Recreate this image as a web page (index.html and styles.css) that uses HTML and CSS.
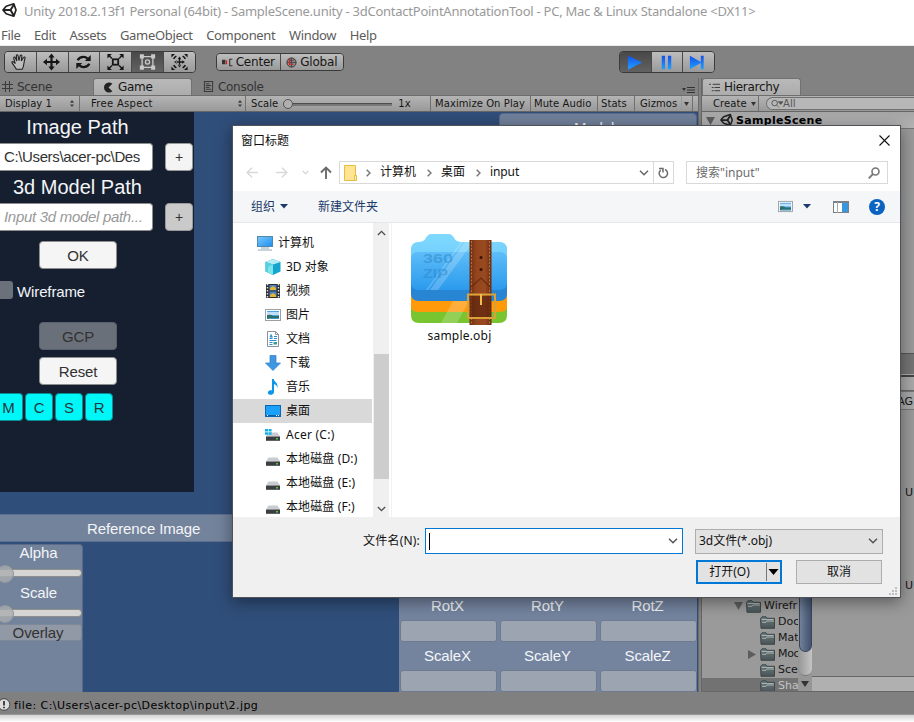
FILE: index.html
```html
<!DOCTYPE html>
<html lang="zh-CN">
<head>
<meta charset="utf-8">
<title>Unity 2018.2.13f1 Personal (64bit)</title>
<link rel="stylesheet" href="styles.css">
</head>
<body>
<svg class="defs" aria-hidden="true">
  <defs>
    <linearGradient id="gBlue" x1="0" y1="0" x2="1" y2="1"><stop offset="0" stop-color="#7cc8fb"/><stop offset="1" stop-color="#1c8fee"/></linearGradient>
    <linearGradient id="gFolder" x1="0" y1="0" x2="0" y2="1"><stop offset="0" stop-color="#78d6fd"/><stop offset=".35" stop-color="#5bbcf8"/><stop offset="1" stop-color="#2b9aed"/></linearGradient>
    <linearGradient id="gPlay" x1="0" y1="0" x2="0" y2="1"><stop offset="0" stop-color="#1450e8"/><stop offset="1" stop-color="#22a0ff"/></linearGradient>
    <linearGradient id="gDir" x1="0" y1="0" x2="0" y2="1"><stop offset="0" stop-color="#6d7a7c"/><stop offset="1" stop-color="#485456"/></linearGradient>
    <linearGradient id="gStrap" x1="0" y1="0" x2="1" y2="0"><stop offset="0" stop-color="#6b2c10"/><stop offset=".3" stop-color="#93451d"/><stop offset=".7" stop-color="#9a4a20"/><stop offset="1" stop-color="#6b2c10"/></linearGradient>
    <symbol id="unity" viewBox="0 0 16 16"><path d="M1 8 4.2 4.2 11.8 1.8 14 8l-2.200 6.200L4.200 11.800z" fill="none" stroke="#222" stroke-width="1.700" stroke-linejoin="round"/><path d="M1.500 8H8.500L12 2.500M8.500 8l3.300 5.500" fill="none" stroke="#222" stroke-width="2"/></symbol>
    <symbol id="dir" viewBox="0 0 15 13"><path d="M.5 2.500 2 .8h4l1 1.500h7.500v10H1z" fill="url(#gDir)" stroke="#3e4849"/><path d="M1.500 3.500h12M2 6.300h4l1-1.300h7" stroke="#aab3b4" fill="none"/></symbol>
    <symbol id="drive" viewBox="0 0 16 16"><path d="M3.500 5.500h9L15 9.500H1z" fill="#c9ccd0"/><rect x="1" y="9.500" width="14" height="4.300" fill="#3b3d40"/><rect x="11" y="11" width="1.800" height="1.500" fill="#45e03a"/></symbol>
    <symbol id="photo" viewBox="0 0 16 14"><rect x=".5" y="1.500" width="15" height="11" fill="#fff" stroke="#9aa0a6"/><rect x="2" y="3" width="12" height="8" fill="#4da3e6"/><path d="M2 4h12v3H2z" fill="#bfe0f8"/><path d="M2 7q4-1 6 1h6v3H2z" fill="#2f6f6a"/><path d="M4 10h10v1H2z" fill="#4594c8"/></symbol>
    <symbol id="chev" viewBox="0 0 10 6"><path d="M1 .8l4 4 4-4" fill="none" stroke="currentColor" stroke-width="1.500"/></symbol>
    <symbol id="spin" viewBox="0 0 6 8"><path d="M3 0l2.300 3H.7zM3 8L.7 5h4.600z" fill="#3c3c3c"/></symbol>
  </defs>
</svg>

<div class="app">
  <header class="titlebar">
    <svg class="logo"><use href="#unity"/></svg>
    <span class="caption">Unity 2018.2.13f1 Personal (64bit) - SampleScene.unity - 3dContactPointAnnotationTool - PC, Mac &amp; Linux Standalone &lt;DX11&gt;</span>
  </header>
  <nav class="menubar"><span>File</span><span>Edit</span><span>Assets</span><span>GameObject</span><span>Component</span><span>Window</span><span>Help</span></nav>

  <div class="toolbar">
    <div class="group tools">
      <b><svg viewBox="0 0 20 20"><path d="M6.500 18C5 15 2.200 12.500 1.500 10.300c.5-1.500 2-.8 3.800 1.500L3.500 5.500c.3-1.500 1.600-1.300 2 0l1.500 3.500L6.500 3c.3-1.500 1.700-1.300 1.900 0l1 5.500 1.400-5.500c.5-1.300 1.900-1 1.800.3l-.6 5.500 2.500-3.800c.9-1 2-.5 1.700.6C14.500 10 15.500 14 13 18z" fill="#bdbdbd" stroke="#222" stroke-width="1.200"/></svg></b>
      <b><svg viewBox="0 0 20 20"><path d="M10 .5l3.500 4.500H11.200v3.800H15V6.500l4.500 3.500L15 13.500v-2.300h-3.800V15h2.300L10 19.500 6.500 15h2.300v-3.800H5v2.300L.5 10 5 6.500v2.300h3.800V5H6.500z" fill="#161616"/></svg></b>
      <b><svg viewBox="0 0 20 20"><path d="M3.500 8Q5.500 4.300 10 4.300q2.500 0 4.500 2M16.500 12q-2 3.700-6.500 3.700-2.500 0-4.500-2" fill="none" stroke="#161616" stroke-width="2.600"/><path d="M11.500 8.800h6.500V2.300zM8.500 11.200H2v6.500z" fill="#161616"/></svg></b>
      <b><svg viewBox="0 0 20 20"><rect x="7" y="7" width="6" height="6" fill="none" stroke="#161616" stroke-width="2"/><path d="M6 6 3 3M14 6l3-3M6 14l-3 3M14 14l3 3" stroke="#161616" stroke-width="1.600"/><path d="M1 1h5L1 6zM19 1v5l-5-5zM1 19v-5l5 5zM19 19h-5l5-5z" fill="#161616"/></svg></b>
      <b class="on"><svg viewBox="0 0 20 20"><path d="M4 4h12v12H4z" fill="none" stroke="#c8c8c8" stroke-width="1.500"/><path d="M1.500 1.500h4.500v4.500H1.500zM14 1.500h4.500v4.500H14zM1.500 14h4.500v4.500H1.500zM14 14h4.500v4.500H14z" fill="#c8c8c8"/><circle cx="10" cy="10" r="2.300" fill="none" stroke="#c8c8c8" stroke-width="1.500"/></svg></b>
      <b><svg viewBox="0 0 20 20"><path d="M10 4l2 3h-4zM10 16l2-3H8zM4 10l3 2V8zM16 10l-3 2V8zM9.300 6h1.400v8H9.300zM6 9.300h8v1.400H6z" fill="#161616"/><path d="M3.500 6.500A7.500 7.500 0 0 1 6.500 3.500M13.500 3.500a7.500 7.500 0 0 1 3 3M16.500 13.500a7.500 7.500 0 0 1-3 3M6.500 16.500a7.500 7.500 0 0 1-3-3" stroke="#161616" stroke-width="1.800" fill="none"/><path d="M1 1h4L1 5zM19 1v4l-4-4zM1 19v-4l4 4zM19 19h-4l4-4z" fill="#161616"/></svg></b>
    </div>
    <div class="group pivot">
      <b><svg viewBox="0 0 10 8"><path d="M0 1.500h3v4H0z" fill="#333"/><path d="M4 2v3.500" stroke="#c22" stroke-width="1.300"/><path d="M9.500 1H7v6h2.500" fill="none" stroke="#333"/></svg>Center</b>
      <b><svg viewBox="0 0 12 12"><circle cx="6" cy="6" r="5" fill="#888" stroke="#333"/><path d="M1 6h10M6 1v10M2.500 3Q6 5 9.500 3" stroke="#333" fill="none" stroke-width=".7"/><path d="M4 2v6h4" stroke="#d22" stroke-width="1.500" fill="none"/></svg>Global</b>
    </div>
    <div class="group play">
      <b class="on"><svg viewBox="0 0 20 20"><path d="M3 2.500l15 7.500-15 7.500z" fill="url(#gPlay)"/></svg></b>
      <b><svg viewBox="0 0 20 20"><path d="M5 3h3.500v14H5zM11.500 3H15v14h-3.500z" fill="url(#gPlay)"/></svg></b>
      <b><svg viewBox="0 0 20 20"><path d="M2 3l11.500 6.500V3h3v14h-3v-6.500L2 17z" fill="url(#gPlay)"/></svg></b>
    </div>
  </div>

  <div class="docks">
    <section class="left">
      <div class="tabs">
        <span class="t-scene"><svg viewBox="0 0 11 11"><path d="M3.500 0v11M7.500 0v11M0 3.500h11M0 7.500h11" stroke="#3c3c3c"/></svg>Scene</span>
        <span class="tab t-game"><svg viewBox="0 0 10 10"><path d="M8.500 1.500A4.600 4.600 0 1 0 8.500 8.500L5 5z" fill="#222"/></svg>Game</span>
        <span class="t-console"><svg viewBox="0 0 10 12"><rect x=".5" y=".5" width="9" height="11" fill="none" stroke="#333"/><path d="M2 3h4M2 5h6M2 7h4M2 9h6" stroke="#333"/></svg>Console</span>
        <svg class="opt" viewBox="0 0 13 8"><path d="M0 2h4L2 5z" fill="#333"/><path d="M5 1.500h8M5 4h8M5 6.500h8" stroke="#333"/></svg>
      </div>
      <div class="bar">
        <span class="c-display">Display 1<svg class="spin"><use href="#spin"/></svg></span>
        <span class="c-aspect">Free Aspect<svg class="spin"><use href="#spin"/></svg></span>
        <span class="c-scale">Scale<i class="track"><i></i></i><em>1x</em></span>
        <span class="c-max">Maximize On Play</span>
        <span class="c-mute">Mute Audio</span>
        <span class="c-stats">Stats</span>
        <span class="c-giz">Gizmos</span>
        <span class="c-arrow"><svg viewBox="0 0 6 4"><path d="M0 0h5L2.500 4z" fill="#333"/></svg></span>
      </div>
      <div class="game">
        <div class="panel">
          <h2>Image Path</h2>
          <div class="row"><div class="field">C:\Users\acer-pc\Des</div><div class="plus">+</div></div>
          <h2 class="second">3d Model Path</h2>
          <div class="row"><div class="field hint">Input 3d model path...</div><div class="plus dim">+</div></div>
          <div class="btn ok">OK</div>
          <div class="check"><i></i><span>Wireframe</span></div>
          <div class="btn off">GCP</div>
          <div class="btn">Reset</div>
          <div class="keys"><b>M</b><b>C</b><b>S</b><b>R</b></div>
        </div>
        <div class="modelhead">Model</div>
        <div class="refhead">Reference Image</div>
        <div class="lower">
          <div class="ref">
            <span>Alpha</span><i class="slide"></i>
            <span>Scale</span><i class="slide"></i>
            <span class="overlay">Overlay</span>
          </div>
          <div class="xform">
            <span>RotX</span><span>RotY</span><span>RotZ</span><i></i><i></i><i></i>
            <span>ScaleX</span><span>ScaleY</span><span>ScaleZ</span><i></i><i></i><i></i>
          </div>
        </div>
      </div>
    </section>

    <section class="right">
      <div class="tabs"><span class="tab t-hier"><svg viewBox="0 0 12 10"><path d="M0 1.500h2M4 1.500h8M3 5h2M6 5h6M3 8.500h2M6 8.500h6" stroke="#333"/></svg>Hierarchy</span></div>
      <div class="bar">
        <span class="c-create">Create<svg viewBox="0 0 6 4"><path d="M0 0h5L2.500 4z" fill="#333"/></svg></span>
        <span class="find"><svg viewBox="0 0 14 10"><circle cx="5" cy="4" r="3" fill="none" stroke="#555"/><path d="M7 6l3 3M9 2.500h5l-2.500 3z" stroke="#555" fill="#555" stroke-width=".8"/></svg>All</span>
      </div>
      <div class="scene"><svg class="tri" viewBox="0 0 9 8"><path d="M0 0h9L4.500 8z" fill="#5d5d5d"/></svg><svg class="mark"><use href="#unity"/></svg>SampleScene</div>
      <div class="hbody"></div>
      <div class="strip"></div>
      <div class="strip2"></div>
      <div class="ag">AG</div>
      <div class="us"><span>U</span><span>U</span></div>
      <div class="project">
        <div class="tree">
          <p class="root"><svg class="tri" viewBox="0 0 9 8"><path d="M0 0h9L4.500 8z" fill="#5d5d5d"/></svg><svg class="dir"><use href="#dir"/></svg>Wirefr</p>
          <p><svg class="dir"><use href="#dir"/></svg>Doc</p>
          <p><svg class="dir"><use href="#dir"/></svg>Mat</p>
          <p class="more"><svg class="tri" viewBox="0 0 8 9"><path d="M0 0v9l8-4.500z" fill="#5d5d5d"/></svg><svg class="dir"><use href="#dir"/></svg>Moc</p>
          <p><svg class="dir"><use href="#dir"/></svg>Sce</p>
          <p class="sel"><svg class="dir"><use href="#dir"/></svg>Sha</p>
        </div>
        <div class="vscroll"><i><i></i></i><svg viewBox="0 0 8 6"><path d="M0 0h8L4 6z" fill="#333"/></svg></div>
        <div class="assets"></div>
      </div>
    </section>
  </div>

  <footer class="status"><svg viewBox="0 0 15 14"><circle cx="4" cy="6.500" r="5.800" fill="#ddd" stroke="#444"/><path d="M4 3v4.500M4 8.800v1.500" stroke="#333" stroke-width="1.800"/></svg>file: C:\Users\acer-pc\Desktop\input\2.jpg</footer>
  <div class="below"></div>
</div>

<div class="dialog">
  <div class="dtitle"><span>窗口标题</span><svg viewBox="0 0 11 11"><path d="M.5.5l10 10M10.500.5l-10 10" stroke="#111" stroke-width="1.100"/></svg></div>
  <div class="nav">
    <svg class="arr" viewBox="0 0 12 11"><path d="M12 5.500H1M6 .8L1.200 5.500 6 10.200" fill="none" stroke="#d9d9d9" stroke-width="1.500"/></svg>
    <svg class="arr" viewBox="0 0 12 11"><path d="M0 5.500h11M6 .8l4.800 4.700L6 10.200" fill="none" stroke="#d9d9d9" stroke-width="1.500"/></svg>
    <svg class="tiny"><use href="#chev"/></svg>
    <svg class="up" viewBox="0 0 12 13"><path d="M6 13V1.500M1 6.500L6 1.500l5 5" fill="none" stroke="#6b6b6b" stroke-width="1.900"/></svg>
    <div class="address">
      <svg class="yf" viewBox="0 0 14 16"><path d="M.5.500h11v10h1v5H.5z" fill="#ffe493" stroke="#e9bd42"/><path d="M10.500 10.500v5h2v-5z" fill="#fff0b8" stroke="#e9bd42"/></svg>
      <svg class="gt" viewBox="0 0 5 8"><path d="M.7.7L4 4 .7 7.300" fill="none" stroke="#777" stroke-width="1.500"/></svg><span class="w1">计算机</span>
      <svg class="gt" viewBox="0 0 5 8"><path d="M.7.7L4 4 .7 7.300" fill="none" stroke="#777" stroke-width="1.500"/></svg><span class="w2">桌面</span>
      <svg class="gt" viewBox="0 0 5 8"><path d="M.7.7L4 4 .7 7.300" fill="none" stroke="#777" stroke-width="1.500"/></svg><span class="w3">input</span>
      <svg class="drop"><use href="#chev"/></svg>
      <span class="reload"><svg viewBox="0 0 11 12"><path d="M7 2.500a4.200 4.200 0 1 1-4.300.6M1 1.500h4v4" fill="none" stroke="#6b6b6b" stroke-width="1.500"/></svg></span>
    </div>
    <div class="search"><span>搜索"input"</span><svg viewBox="0 0 12 12"><circle cx="7.500" cy="4.500" r="3.500" fill="none" stroke="#777" stroke-width="1.600"/><path d="M5 7L.8 11.300" stroke="#777" stroke-width="1.900"/></svg></div>
  </div>
  <div class="cmd">
    <span class="org">组织</span><svg class="dn" viewBox="0 0 8 5"><path d="M0 0h8L4 4.500z" fill="#1b3a6b"/></svg>
    <span class="newf">新建文件夹</span>
    <svg class="view"><use href="#photo"/></svg><svg class="dn d2" viewBox="0 0 8 5"><path d="M0 0h8L4 4.500z" fill="#1b3a6b"/></svg>
    <svg class="pane" viewBox="0 0 16 12"><rect x=".5" y=".5" width="15" height="11" fill="#fff" stroke="#7b8187"/><path d="M0 1h16" stroke="#7b8187" stroke-width="2"/><path d="M4.500 1v11" stroke="#a5a9ad"/><rect x="9" y="2" width="6" height="9" fill="#3a96dd"/></svg>
    <span class="help">?</span>
  </div>
  <div class="dbody">
    <div class="side">
      <p class="top"><svg viewBox="0 0 16 16"><rect x=".5" y="1.500" width="15" height="10" fill="url(#gBlue)" stroke="#4f87ad"/><path d="M4 13h8M1 15h14" stroke="#8fa8b8"/></svg>计算机</p>
      <p><svg viewBox="0 0 16 16"><path d="M8 0l7.500 3v9.500L8 16 .5 12.500V3z" fill="#12a5cf"/><path d="M8 0l7.500 3L8 5.500.5 3z" fill="#b7ecf5"/><path d="M.5 3L8 5.500V16L.5 12.500z" fill="#54d1e0"/><path d="M3 8l5-2.500V16L3 13.500z" fill="#7fe3ec"/></svg>3D 对象</p>
      <p><svg viewBox="0 0 16 16"><rect x="1" y="1" width="14" height="14" fill="#2c2c2c"/><path d="M2.500 1v14M13.500 1v14" stroke="#ddd" stroke-width="1.500" stroke-dasharray="1.500 1.500"/><rect x="4.500" y="2" width="7" height="5.500" fill="#4c83c8"/><rect x="4.500" y="8.500" width="7" height="5.500" fill="#4c83c8"/><path d="M5 5l3-2 3 2v2H5zM5 12l3-2 3 2v2H5z" fill="#e0b53a"/></svg>视频</p>
      <p><svg viewBox="0 0 16 14"><use href="#photo"/></svg>图片</p>
      <p><svg viewBox="0 0 16 16"><path d="M2.500.5h8l3 3v12h-11z" fill="#fff" stroke="#8b9197"/><path d="M10.500.5v3h3" fill="none" stroke="#8b9197"/><path d="M4.500 7.500h3M9 5.500h3M9 7.500h3M4.500 9.500h7M4.500 11.500h3M4.500 13.500h3" stroke="#2d8fd0"/><path d="M4.500 6.500l1.500-4 2 4z" fill="#2d8fd0"/><rect x="8.500" y="11" width="3.500" height="2.500" fill="#3c9a8c"/></svg>文档</p>
      <p><svg viewBox="0 0 16 16"><path d="M5 .5h6V8h4.500L8 15.500.5 8H5z" fill="#3f97e0" stroke="#2b80c8" stroke-width=".7"/></svg>下载</p>
      <p><svg viewBox="0 0 16 16"><path d="M7 0h1.800c.2 3 4.500 3.500 3.800 9-.8-3-2-3.500-3.600-3.800V13c0 2-2 3-4 2.800-2.800-.3-2.800-3.800 0-4.500.8-.2 1.400-.2 2 0z" fill="#0a97ea"/></svg>音乐</p>
      <p class="cur"><svg viewBox="0 0 16 16"><rect x=".5" y="2.500" width="15" height="11" fill="#1ba1fa" stroke="#0c68b0"/><path d="M1 12.500h14" stroke="#0a5ea3"/><path d="M2 12.500h1M11 12.500h1M13 12.500h1" stroke="#fff"/></svg>桌面</p>
      <p class="acer"><svg viewBox="0 0 16 16"><use href="#drive"/><path d="M0 2h3v2.500H0zM3.600 2h3v2.500h-3zM0 5.200h3v2.500H0zM3.600 5.200h3v2.500h-3z" fill="#10b4ea"/></svg>Acer (C:)</p>
      <p class="disk"><svg><use href="#drive"/></svg>本地磁盘 (D:)</p>
      <p class="disk"><svg><use href="#drive"/></svg>本地磁盘 (E:)</p>
      <p class="disk"><svg><use href="#drive"/></svg>本地磁盘 (F:)</p>
    </div>
    <div class="scroll"><svg class="flip"><use href="#chev"/></svg><i></i><svg><use href="#chev"/></svg></div>
    <div class="files">
      <div class="file">
        <svg viewBox="0 0 96 92">
          <path d="M0 60h96v21q0 8-8 8H8q-8 0-8-8z" fill="#79c52f"/><path d="M0 60h96v13q0 5-8 5H8q-8 0-8-5z" fill="#ff9a0a"/>
          <path d="M0 44h96v16q0 7-8 7H8q-8 0-8-7z" fill="#2785d4"/>
          <path d="M0 16q0-8 8-8 5 0 7-4 2-4 6-4h16q4 0 6 4 2 4 7 4h38q8 0 8 8v33q0 7-8 7H8q-8 0-8-7z" fill="url(#gFolder)"/>
          <path d="M0 25q0-7 8-7h80q8 0 8 7v-9q0-8-8-8H50q-5 0-7-4-2-4-6-4H21q-4 0-6 4-2 4-7 4-8 0-8 8z" fill="#86dcff" opacity=".6"/>
          <path d="M54 8h8L27 56h-8zM50 8h2L17 56h-2zM42 67h16l-12 22H30z" fill="#fff" opacity=".2"/>
          <text x="12" y="29" class="zip" textLength="30" lengthAdjust="spacingAndGlyphs">360</text><text x="12" y="43.500" class="zip" textLength="25" lengthAdjust="spacingAndGlyphs">ZIP</text>
          <path d="M58.500 6h22v85h-22z" fill="url(#gStrap)"/><path d="M60.500 7v83M78.500 7v83" stroke="#cc8050" stroke-width=".8" stroke-dasharray="2 1.500"/>
          <circle cx="70" cy="23.500" r="1.500" fill="#351205"/><circle cx="70" cy="35.500" r="1.500" fill="#351205"/>
          <path d="M59 54l11-10 10 10" fill="none" stroke="#6c2d12" stroke-width="1.200"/><path d="M60 85V62h20v23z" fill="#5c250e" opacity=".7"/>
          <rect x="57" y="60.500" width="27" height="23.500" fill="none" stroke="#dba136" stroke-width="2"/><path d="M70 60v11" stroke="#f1c04c" stroke-width="2"/>
        </svg>
        <span>sample.obj</span>
      </div>
    </div>
  </div>
  <div class="dfoot">
    <div class="line">
      <label>文件名(N):</label>
      <div class="name"><i></i><svg><use href="#chev"/></svg></div>
      <div class="type"><span>3d文件(*.obj)</span><svg><use href="#chev"/></svg></div>
    </div>
    <div class="acts"><div class="open"><span>打开(O)</span><i><svg viewBox="0 0 10 6"><path d="M0 0h10L5 6z"/></svg></i></div><div class="cancel">取消</div></div>
    <svg class="grip" viewBox="0 0 8 8"><path d="M6 0h2v2H6zM3 3h2v2H3zM6 3h2v2H6zM0 6h2v2H0zM3 6h2v2H3zM6 6h2v2H6z" fill="#bfbfbf"/></svg>
  </div>
</div>
</body>
</html>
```
FILE: styles.css
```css
* { box-sizing: border-box; }
html, body { margin: 0; height: 722px; overflow: hidden; }
body { position: relative; width: 914px; background: #fff; }
p, h2 { margin: 0; }
i, em { font-style: normal; }
svg { flex: none; display: block; }
.defs { position: absolute; width: 0; height: 0; }

.app { display: flex; flex-direction: column; height: 722px; font: 11px/16px "DejaVu Sans", sans-serif; color: #161616; }
.titlebar { display: flex; height: 22px; padding-left: 2px; align-items: center; font: 13px/20px "Noto Sans", sans-serif; color: #999; white-space: nowrap; }
.logo { width: 16px; height: 16px; margin: -2px 6px 0 0; }
.caption { margin-top: -1px; letter-spacing: -.25px; }
.menubar { display: flex; gap: 13.500px; height: 24px; padding: 3px 0 0 1px; border-bottom: 1px solid #e9ecea; font: 13px/20px "Noto Sans", sans-serif; letter-spacing: -.33px; color: #5c5c5c; }

.toolbar { display: flex; height: 32px; padding: 5px 0 0 4px; background: #828282; }
.group { display: flex; height: 22px; border: 1px solid #3b3b3b; border-radius: 4px; overflow: hidden; }
.group b { display: flex; align-items: center; justify-content: center; font-weight: 400; background: linear-gradient(#bdbdbd, #999); border-right: 1px solid #4a4a4a; }
.group b:last-child { border-right: 0; }
.group b.on { background: linear-gradient(#484848, #626262); }
.tools { width: 192px; }
.tools b, .play b { flex: 1; }
.tools svg { width: 19px; height: 18px; margin-left: -1px; }
.pivot { width: 128px; height: 18px; margin: 2px 0 0 20px; font-size: 12px; letter-spacing: -.2px; }
.pivot b { flex: 1; gap: 3px; }
.pivot svg { width: 11px; height: 11px; }
.play { width: 96px; margin-left: 275px; }
.play svg { width: 19px; height: 19px; margin-left: -2px; }

.docks { display: flex; height: 614px; background: #828282; }
.left { display: flex; flex-direction: column; width: 699px; border-right: 1px solid #6a6a6a; }
.right { display: flex; flex-direction: column; flex: 1; margin-left: 2px; background: #9a9a9a; border-left: 1px solid #666; }
.tabs { display: flex; align-items: center; height: 17px; font-size: 12px; letter-spacing: -.3px; background: #828282; color: #333; }
.tabs span { display: flex; align-items: center; gap: 4px; height: 16px; }
.tabs .tab { background: linear-gradient(#b9b9b9, #acacac); border: 1px solid #727272; border-bottom: 0; border-radius: 3px 3px 0 0; height: 17px; color: #161616; }
.tabs svg { width: 11px; height: 11px; }
.t-scene { width: 93px; padding-left: 2px; }
.tabs .t-game { width: 99px; padding-left: 9px; }
.t-console { padding-left: 11px; }
.tabs .opt { width: 13px; height: 8px; margin: 7px 3px 0 auto; }
.tabs .t-hier { width: 99px; padding-left: 6px; }
.bar { display: flex; height: 17px; font-size: 10px; letter-spacing: .07px; background: linear-gradient(#b4b4b4, #999); border-top: 1px solid #6d6d6d; border-bottom: 1px solid #666; white-space: nowrap; }
.bar > span { display: flex; align-items: center; border-right: 1px solid #707070; height: 15px; }
.bar .spin { width: 6px; height: 7px; margin-left: auto; }
.c-display { width: 80px; padding: 0 4px 0 5px; }
.bar > .c-aspect { width: 166px; padding: 0 2px 0 11px; letter-spacing: .3px; }
.c-scale { width: 185px; padding-left: 5px; }
.track { width: 109px; height: 3px; margin: 2px 6px 0 5px; background: #777; border-top: 1px solid #4d4d4d; }
.track i { display: block; width: 10px; height: 10px; margin-top: -5px; border-radius: 50%; background: #b0b0b0; border: 1px solid #555; }
.c-max { width: 100px; padding-left: 4px; }
.c-mute { width: 67px; padding-left: 3px; }
.c-stats { width: 37px; padding-left: 3px; }
.c-giz { width: 47px; padding-left: 5px; }
.bar > .c-giz { border-right-color: #999; }
.c-arrow { width: 11px; padding-left: 2px; }
.bar span > svg:not(.spin) { width: 6px; height: 4px; }
.c-create { width: 57px; padding-left: 11px; gap: 4px; }
.bar > .find { flex: 1; margin: 1px 0 0 7px; height: 13px; border: 1px solid #707070; border-right: 0; border-radius: 7px 0 0 7px; background: #b7b7b7; color: #555; padding-left: 3px; }
.bar .find > svg:not(.spin) { width: 13px; height: 10px; }

.game { display: flex; flex-direction: column; position: relative; height: 580px; background: #304e7a; font: 15px/20px "Liberation Sans", Arial, sans-serif; letter-spacing: -.12px; color: #f3f5f8; }
.panel { display: flex; flex-direction: column; width: 194px; height: 380px; background: #161f30; }
.panel h2 { width: 155px; height: 31px; font: 20px/31px "Liberation Sans", Arial, sans-serif; letter-spacing: 0; text-align: center; }
.panel .second { height: 32px; line-height: 33px; }
.row { display: flex; gap: 12px; height: 28px; color: #323232; }
.field { width: 153px; line-height: 26px; padding-left: 4px; background: #fff; border: 1px solid #8d8d8d; border-left: 0; border-radius: 0 4px 4px 0; white-space: nowrap; letter-spacing: -.37px; }
.hint { color: #999; font-style: italic; letter-spacing: -.3px; }
.plus { width: 28px; line-height: 26px; background: #f4f4f4; border: 1px solid #999; border-radius: 4px; text-align: center; font-size: 14px; }
.plus.dim { background: #cacaca; }
.btn { width: 78px; height: 28px; margin: 0 0 7px 39px; line-height: 27px; text-align: center; color: #323232; background: #f5f5f5; border: 1px solid #8e8e8e; border-radius: 4px; }
.ok { margin: 10px 0 12px 39px; }
.off { background: #6a707a; border-color: #59606b; }
.check { display: flex; align-items: center; height: 18px; margin-bottom: 23px; gap: 4px; }
.check i { width: 13px; height: 18px; background: #6a717b; border-radius: 0 3px 3px 0; }
.check span { padding-top: 3px; }
.keys { display: flex; gap: 2px; margin-top: 1px; }
.keys b { width: 28px; height: 28px; font-weight: 400; line-height: 27px; text-align: center; background: #00f7f7; border: 1px solid #0a8c96; border-radius: 4px; color: #24383c; }
.keys b:first-child { width: 23px; padding-right: 5px; border-left: 0; border-radius: 0 4px 4px 0; }
.modelhead { position: absolute; left: 499px; top: 1px; width: 198px; height: 30px; padding: 4px 0 0 74px; background: #71809b; border: 1px solid #5a6b89; border-radius: 4px; }
.refhead { width: 400px; height: 28px; margin-top: 22px; padding: 4px 0 0 87px; background: #73839c; border: 1px solid #5d6f8d; border-width: 1px 0; }
.lower { display: flex; justify-content: space-between; align-items: flex-end; height: 150px; padding-right: 1px; }
.ref { width: 83px; height: 148px; background: #73839c; border: 1px solid #5a6b89; border-width: 1px 1px 0 0; border-radius: 0 4px 0 0; }
.ref span { display: block; width: 77px; height: 18px; line-height: 16px; text-align: center; }
.slide { display: block; position: relative; height: 8px; margin: 6px 0 8px; background: #d5d5d3; border-radius: 0 4px 4px 0; border: 1px solid #8c8f8c; border-left: 0; }
.slide::before { content: ""; position: absolute; left: -4px; top: -5px; width: 16px; height: 16px; border-radius: 50%; background: #aaadb0cc; border: 1px solid #90969e; }
.ref .overlay { width: 82px; height: 17px; line-height: 15px; margin-top: -1px; padding-right: 5px; background: #9299a6; color: #323232; border: 1px solid #7d8899; border-left: 0; border-radius: 0 3px 3px 0; }
.xform { display: grid; grid-template-columns: repeat(3, 97px); grid-template-rows: 28px 22px 28px 22px; column-gap: 3px; width: 298px; padding-left: 1px; background: #74849f; text-align: center; }
.xform span { line-height: 28px; padding-right: 2px; }
.xform i { background: #9ca3b1; border: 1px solid #6e7b8f; border-radius: 3px; }

.scene { display: flex; align-items: center; height: 17px; padding: 2px 0 0 4px; background: linear-gradient(#a6a6a6, #b4b4b4); border-bottom: 1px solid #747474; font-weight: 700; letter-spacing: .3px; color: #000; }
.scene .tri { width: 9px; height: 8px; }
.mark { width: 14px; height: 14px; margin: -2px 2px 0 5px; }
.hbody { height: 224px; }
.strip { height: 22px; background: #747474; border-top: 1px solid #555; border-bottom: 1px solid #aaa; }
.strip2 { height: 16px; background: #a8a8a8; border-top: 2px solid #444; border-bottom: 1px solid #666; }
.ag { height: 19px; padding-right: 1px; background: #a8a8a8; text-align: right; border: 1px solid #777; border-width: 1px 0; line-height: 19px; }
.us { display: flex; flex-direction: column; height: 188px; align-items: flex-end; padding: 75px 1px 0 0; }
.us span { flex: none; height: 93px; }
.project { display: flex; height: 94px; border-bottom: 1px solid #666; }
.tree { width: 96px; overflow: hidden; }
.tree p { display: flex; align-items: center; height: 16px; padding-left: 58px; white-space: nowrap; font-size: 11px; }
.tree .root { padding-left: 32px; gap: 3px; }
.tree .more { padding-left: 46px; }
.more .tri { width: 8px; height: 9px; margin-right: 4px; }
.root .tri { width: 9px; height: 8px; }
.dir { width: 15px; height: 13px; margin-right: 3px; }
.root .dir { margin: 0; }
.tree .sel { background: #727272; color: #c4c4c4; }
.more { letter-spacing: -.3px; }
.vscroll { width: 14px; background: #969696; display: flex; flex-direction: column; align-items: center; justify-content: space-between; padding-bottom: 4px; }
.vscroll > i { width: 13px; height: 78px; border-radius: 0 0 7px 7px; background: linear-gradient(90deg, #999, #c4c4c4); border-bottom: 1px solid #777; }
.vscroll i i { display: block; height: 54px; border-radius: 0 0 7px 7px; background: linear-gradient(90deg, #72819a, #53647f 60%, #435471); border: 1px solid #36445c; border-top: 0; }
.vscroll svg { width: 8px; height: 6px; }
.assets { flex: 1; background: linear-gradient(#9a9a9a 0 78px, #666 78px 79px, #b0b0b0 79px); }
.status { display: flex; height: 23px; align-items: center; padding-top: 6px; background: #808080; border-bottom: 1px solid #999; color: #000; font-size: 11px; line-height: 16px; letter-spacing: .43px; }
.status svg { width: 15px; height: 14px; margin: -3px -1px 0 0; }
.below { flex: 1; background: linear-gradient(#d2d2d2, #fff); }

.dialog { position: absolute; left: 232px; top: 125px; width: 669px; height: 473px; display: flex; flex-direction: column; background: #fff; border: 1px solid #4f5359; box-shadow: 0 4px 15px rgba(0, 0, 0, .42); font: 12px/18px "Noto Sans", "Noto Sans CJK SC", sans-serif; color: #111; }
.dtitle { display: flex; justify-content: space-between; height: 35px; padding: 6px 10px 0 8px; }
.dtitle svg { width: 11px; height: 11px; margin-top: 3px; }
.nav { display: flex; align-items: center; height: 23px; padding-left: 13px; }
.arr { width: 12px; height: 11px; margin-right: 18px; }
.tiny { width: 7px; height: 5px; color: #ccc; margin: 0 11px 0 -4px; }
.up { width: 12px; height: 13px; margin-right: 7px; }
.address { display: flex; align-items: center; width: 335px; height: 23px; padding-left: 4px; border: 1px solid #d9d9d9; }
.yf { width: 14px; height: 16px; }
.gt { width: 5px; height: 8px; margin: 0 9px; }
.address .yf + .gt { margin-left: 8px; }
.address span { margin-top: -1px; }
.w1 { width: 38px; }
.w2 { width: 26px; }
.w3 { letter-spacing: -.1px; }
.drop { width: 10px; height: 6px; margin: 0 4px 0 auto; color: #666; }
.address .reload { display: flex; align-items: center; justify-content: center; width: 20px; height: 21px; margin: 0; border-left: 1px solid #d9d9d9; }
.reload svg { width: 11px; height: 12px; }
.search { display: flex; align-items: center; justify-content: space-between; width: 202px; height: 23px; margin-left: 12px; padding: 0 7px 0 9px; border: 1px solid #d9d9d9; color: #6d6d6d; }
.search svg { width: 12px; height: 12px; }
.cmd { display: flex; align-items: center; height: 32px; margin-top: 7px; padding-left: 18px; background: #f5f6f7; border-bottom: 1px solid #e6e7e8; color: #1b3a6b; }
.dn { width: 8px; height: 5px; margin-left: 5px; }
.newf { margin-left: 30px; }
.view { width: 15px; height: 13px; margin-left: 400px; }
.d2 { margin-left: 10px; }
.pane { width: 16px; height: 12px; margin-left: 22px; }
.help { width: 16px; height: 16px; margin-left: 20px; border-radius: 50%; background: #0a63c0; color: #fff; font: 700 12px/16px "Noto Sans", sans-serif; text-align: center; }
.dbody { display: flex; height: 294px; overflow: hidden; }
.side { width: 139px; padding-top: 8px; white-space: nowrap; }
.side p { display: flex; align-items: center; gap: 5px; height: 24px; padding-left: 32px; }
.side .top { padding-left: 24px; }
.side svg { width: 16px; height: 16px; }
.side .cur { background: #d9d9d9; }
.side .acer { letter-spacing: .25px; }
.side .disk svg { margin-top: 1px; }
.side .disk { letter-spacing: .12px; }
.scroll { display: flex; flex-direction: column; align-items: center; width: 16px; margin-left: 1px; padding: 7px 0 5px; background: #f0f0f0; color: #505050; }
.scroll svg { width: 9px; height: 6px; }
.scroll .flip { transform: scaleY(-1); }
.scroll i { width: 15px; height: 125px; margin: 118px 0 auto; background: #cdcdcd; }
.files { flex: 1; margin-left: 2px; border-left: 1px solid #f2f2f2; padding: 11px 0 0 18px; }
.file { display: flex; flex-direction: column; align-items: center; width: 98px; }
.file svg { width: 96px; height: 92px; }
.file span { margin: 1px 0 0 1px; letter-spacing: .2px; }
.zip { font: 700 12px "Liberation Sans", sans-serif; fill: #2e86c8; opacity: .5; }
.dfoot { flex: 1; position: relative; background: #f0f0f0; padding-top: 11px; }
.line { display: flex; align-items: center; height: 26px; }
.line label { width: 192px; padding-right: 5px; text-align: right; letter-spacing: .2px; }
.name { display: flex; align-items: center; justify-content: space-between; width: 258px; height: 26px; padding: 0 4px 0 3px; background: #fff; border: 1px solid #0078d7; color: #555; }
.name i { width: 1px; height: 17px; background: #000; }
.line svg { width: 10px; height: 6px; }
.type { display: flex; align-items: center; justify-content: space-between; width: 188px; height: 25px; margin-left: 12px; padding: 0 4px 0 3px; background: #e2e2e2; border: 1px solid #adadad; }
.type svg { color: #555; }
.acts { display: flex; gap: 14px; margin: 6px 0 0 463px; }
.open { display: flex; align-items: center; width: 86px; height: 24px; border: 2px solid #0078d7; background: #e2e2e2; }
.open span { width: 68px; padding-right: 5px; text-align: center; }
.open i { height: 18px; border-left: 1px solid #777; display: flex; align-items: center; padding-left: 1px; }
.open svg { width: 11px; height: 6px; }
.cancel { width: 86px; height: 24px; line-height: 21px; text-align: center; background: #e2e2e2; border: 1px solid #adadad; }
.grip { position: absolute; right: 3px; bottom: 2px; width: 8px; height: 8px; }
```
